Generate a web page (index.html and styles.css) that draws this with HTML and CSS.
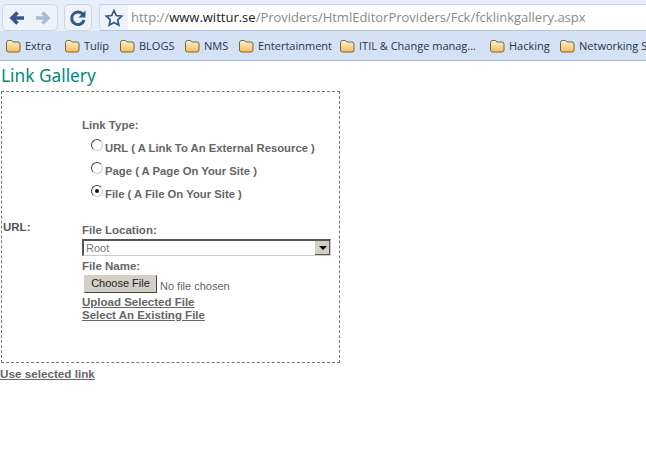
FILE: index.html
```html
<!DOCTYPE html>
<html lang="en">
<head>
    <meta charset="UTF-8">
    <title>Link Gallery</title>
    <link rel="stylesheet" href="styles.css">
</head>
<body>
    <svg class="defs" width="0" height="0">
        <defs>
            <linearGradient id="fg" x1="0" y1="0" x2="0" y2="1"><stop offset="0" stop-color="#fdf0c4"/><stop offset="1" stop-color="#f2bd62"/></linearGradient>
            <symbol id="folder" viewBox="0 0 16 14"><path d="M1.500 3.500q0-2 2-2h3l1.500 1.500h5q2 0 2 2v6q0 2-2 2h-9.500q-2 0-2-2z" fill="url(#fg)" stroke="#6e6548"/></symbol>
        </defs>
    </svg>
    <div class="toolbar">
        <div class="nav-group">
            <svg width="16" height="18" viewBox="0 0 16 18"><path d="M15 9H4M8.500 3.500L3 9l5.500 5.500" fill="none" stroke="#34568a" stroke-width="3.600"/></svg>
            <svg width="16" height="18" viewBox="0 0 16 18"><path d="M1 9h11M7.500 3.500L13 9l-5.500 5.500" fill="none" stroke="#a9bcd6" stroke-width="3.600"/></svg>
        </div>
        <div class="nav-group reload">
            <svg width="20" height="20" viewBox="0 0 20 20"><path d="M15 6.500A6.300 6.300 0 1 0 16 12" fill="none" stroke="#34568a" stroke-width="3"/><path d="M17.500 2.500v7h-7z" fill="#34568a"/></svg>
        </div>
        <div class="address">
            <div class="star">
                <svg width="20" height="20" viewBox="0 0 20 20"><path d="M10 2.500l2.300 5 5.400.6-4 3.700 1.100 5.400L10 14.500l-4.800 2.700 1.100-5.400-4-3.700 5.400-.6z" fill="#eef3fa" stroke="#34568a" stroke-width="1.700"/></svg>
            </div>
            <div class="url">http://<span class="host">www.wittur.se</span>/Providers/HtmlEditorProviders/Fck/fcklinkgallery.aspx</div>
        </div>
    </div>
    <div class="bookmarks">
        <div class="bookmark b-extra"><svg class="folder" viewBox="0 0 16 14"><use href="#folder"/></svg>Extra</div>
        <div class="bookmark b-tulip"><svg class="folder" viewBox="0 0 16 14"><use href="#folder"/></svg>Tulip</div>
        <div class="bookmark b-blogs"><svg class="folder" viewBox="0 0 16 14"><use href="#folder"/></svg>BLOGS</div>
        <div class="bookmark b-nms"><svg class="folder" viewBox="0 0 16 14"><use href="#folder"/></svg>NMS</div>
        <div class="bookmark b-ent"><svg class="folder" viewBox="0 0 16 14"><use href="#folder"/></svg>Entertainment</div>
        <div class="bookmark b-itil"><svg class="folder" viewBox="0 0 16 14"><use href="#folder"/></svg>ITIL &amp; Change manag...</div>
        <div class="bookmark b-hack"><svg class="folder" viewBox="0 0 16 14"><use href="#folder"/></svg>Hacking</div>
        <div class="bookmark b-net"><svg class="folder" viewBox="0 0 16 14"><use href="#folder"/></svg>Networking Sites</div>
    </div>

    <div class="page">
        <h1 class="title">Link Gallery</h1>
        <div class="gallery">
            <div class="url-label">URL:</div>
            <div class="fields">
                <div class="label">Link Type:</div>
                <div class="radios">
                    <div class="radio-row"><span class="radio"></span>URL ( A Link To An External Resource )</div>
                    <div class="radio-row"><span class="radio"></span>Page ( A Page On Your Site )</div>
                    <div class="radio-row"><span class="radio checked"></span>File ( A File On Your Site )</div>
                </div>
                <div class="label location">File Location:</div>
                <div class="select"><span class="select-text">Root</span><span class="select-arrow"></span></div>
                <div class="label name">File Name:</div>
                <div class="file-row"><span class="file-btn">Choose File</span><span class="file-none">No file chosen</span></div>
                <div class="links">
                    <a class="link" href="#">Upload Selected File</a>
                    <a class="link" href="#">Select An Existing File</a>
                </div>
            </div>
        </div>
        <a class="link use" href="#">Use selected link</a>
    </div>
</body>
</html>
```

FILE: styles.css
```css
html, body {
    margin: 0;
    padding: 0;
    height: 462px;
    overflow: hidden;
    background: white;
    font-family: "Liberation Sans", Arial, sans-serif;
}

.defs {
    position: absolute;
}

/* browser chrome */
.toolbar {
    height: 31px;
    box-sizing: border-box;
    background: #e6eef9;
    padding: 4px 0 0 2px;
    display: flex;
    align-items: flex-start;
    gap: 6px;
}

.nav-group {
    height: 25px;
    width: 54px;
    border: 1px solid #c9d6e8;
    border-radius: 5px;
    background: #eef3fa;
    display: flex;
    align-items: center;
    justify-content: center;
    gap: 10px;
}

.nav-group.reload {
    width: 26px;
}

.address {
    flex: 1;
    height: 25px;
    margin-left: 1px;
    display: flex;
    border-top: 1px solid #c9d6e8;
    border-bottom: 1px solid #b5c7de;
}

.star {
    width: 28px;
    background: #eef3fa;
    border-left: 1px solid #c9d6e8;
    border-radius: 5px 0 0 5px;
    display: flex;
    align-items: center;
    justify-content: center;
}

.url {
    flex: 1;
    background: white;
    font-family: "Open Sans", sans-serif;
    font-size: 13px;
    line-height: 25px;
    color: #8a8a8a;
    white-space: nowrap;
    overflow: hidden;
    padding-left: 3px;
}

.host {
    color: #222;
}

.bookmarks {
    height: 30px;
    box-sizing: border-box;
    background: #d4e2f3;
    border-bottom: 1px solid #a9b8cb;
    overflow: hidden;
    font-family: "Open Sans", sans-serif;
    font-size: 11px;
    color: #1f3554;
    display: flex;
    align-items: center;
    white-space: nowrap;
}

.bookmark {
    display: flex;
    align-items: center;
    gap: 4px;
    flex: none;
}

.folder {
    width: 16px;
    height: 14px;
}

.b-extra { margin-left: 5px; width: 59px; }
.b-tulip { width: 55px; }
.b-blogs { width: 65px; }
.b-nms { width: 54px; }
.b-ent { width: 101px; }
.b-itil { width: 150px; }
.b-hack { width: 70px; }

/* page */
.page {
    color: #666;
    font-size: 11.500px;
    font-weight: bold;
}

.title {
    margin: 0;
    padding: 3px 0 3px 1px;
    font-family: "Noto Sans", sans-serif;
    font-size: 17.300px;
    line-height: 24px;
    font-weight: normal;
    color: #00897b;
}

.gallery {
    width: 337px;
    height: 270px;
    margin-left: 1px;
    border: 1px dashed #777;
    display: flex;
    position: relative;
}

.url-label {
    position: absolute;
    left: 1px;
    top: 129px;
    font-size: 11.500px;
    color: #555;
}

.fields {
    margin-left: 80px;
    padding-top: 26px;
    width: 249px;
    display: flex;
    flex-direction: column;
    align-items: flex-start;
}

.label {
    line-height: 14px;
}

.radios {
    margin: 9px 0 0 9px;
    display: flex;
    flex-direction: column;
    gap: 9px;
    font-size: 11.300px;
}

.radio-row {
    display: flex;
    align-items: center;
    height: 14px;
    gap: 2px;
}

.radio {
    width: 10px;
    height: 10px;
    border: 1px solid #444;
    border-right-color: #ccc;
    border-bottom-color: #ccc;
    border-radius: 50%;
    background: white;
    position: relative;
    top: -3px;
}

.radio.checked::after {
    content: "";
    position: absolute;
    left: 3px;
    top: 3px;
    width: 4px;
    height: 4px;
    border-radius: 50%;
    background: #111;
}

.location {
    margin-top: 22px;
}

.select {
    width: 249px;
    height: 17px;
    box-sizing: border-box;
    margin-top: 2px;
    border: 1px solid #ccc;
    border-top: 2px solid #555;
    border-left: 2px solid #555;
    display: flex;
    justify-content: space-between;
    font-weight: normal;
}

.select-text {
    font-size: 11px;
    line-height: 14px;
    padding-left: 2px;
    color: #777;
}

.select-arrow {
    width: 15px;
    background: #d4d0c8;
    border-left: 1px solid #fff;
    box-shadow: inset -1px -1px 0 #555;
    position: relative;
}

.select-arrow::after {
    content: "";
    position: absolute;
    left: 4px;
    top: 5px;
    border: 4px solid transparent;
    border-top: 4px solid #000;
    border-bottom: 0;
}

.name {
    margin-top: 3px;
}

.file-row {
    display: flex;
    align-items: center;
    margin: 2px 0 0 2px;
    font-weight: normal;
}

.file-btn {
    width: 73px;
    height: 18px;
    box-sizing: border-box;
    background: #d4d0c8;
    border: 1px solid #d4d0c8;
    border-right-color: #444;
    border-bottom-color: #444;
    font-size: 11px;
    line-height: 15px;
    text-align: center;
    color: #222;
}

.file-none {
    margin: 3px 0 0 3px;
    font-size: 11px;
    color: #666;
}

.links {
    margin-top: 3px;
}

.link {
    color: #666;
    line-height: 13px;
    display: block;
}

.use {
    margin-top: 4px;
    font-size: 11.700px;
}
```
